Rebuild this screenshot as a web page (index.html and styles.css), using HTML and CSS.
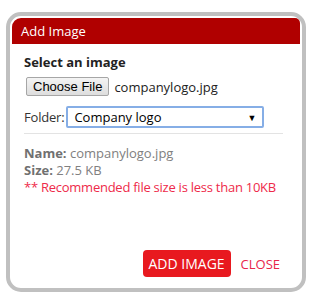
FILE: index.html
```html
<!DOCTYPE html>
<html lang="en">

<head>
    <meta charset="UTF-8">
    <meta name="viewport" content="width=device-width, initial-scale=1.0">
    <title>Add Image</title>
    <link rel="stylesheet" href="styles.css">
</head>

<body>
    <div class="dialog">
        <div class="dialog-header">Add Image</div>
        <div class="dialog-body">
            <div class="field-title">Select an image</div>
            <div class="file-row">
                <button class="choose-button">Choose File</button>
                <span class="file-name">companylogo.jpg</span>
            </div>
            <div class="folder-row">
                <span class="folder-label">Folder:</span>
                <div class="folder-select">
                    <span>Company logo</span>
                    <span class="arrow">&#9660;</span>
                </div>
            </div>
            <div class="divider"></div>
            <div class="file-info">
                <div><strong>Name:</strong> companylogo.jpg</div>
                <div><strong>Size:</strong> 27.5 KB</div>
                <div class="warning">** Recommended file size is less than 10KB</div>
            </div>
        </div>
        <div class="dialog-footer">
            <button class="add-button">ADD IMAGE</button>
            <button class="close-button">CLOSE</button>
        </div>
    </div>
</body>

</html>
```

FILE: styles.css
```css
body {
    margin: 0;
    font-family: 'Open Sans', 'Noto Sans', sans-serif;
    background-color: #ffffff;
}

.dialog {
    box-sizing: border-box;
    width: 300px;
    height: 280px;
    margin: 12px 0 0 6px;
    border: 4px solid #c0c0c0;
    border-radius: 15px;
    padding: 2px;
    background-color: #ffffff;
    display: flex;
    flex-direction: column;
}

.dialog-header {
    height: 26px;
    line-height: 26px;
    padding-left: 9px;
    background-color: #b00000;
    color: #ffffff;
    font-size: 13px;
    border-radius: 9px 5px 0 0;
}

.dialog-body {
    flex: 1;
    padding: 9px 17px 0 12px;
    font-size: 13px;
    color: #222;
}

.field-title {
    font-weight: bold;
    line-height: 18px;
}

.file-row {
    display: flex;
    align-items: center;
    gap: 5px;
    margin-top: 6px;
}

.choose-button {
    height: 19px;
    padding: 0 6px;
    margin-left: 2px;
    font-family: 'Liberation Sans', Arial, sans-serif;
    font-size: 13px;
    color: #000;
    background: linear-gradient(#f4f4f4, #dddddd);
    border: 1px solid #a6a6a6;
    border-radius: 2px;
}

.folder-row {
    display: flex;
    align-items: center;
    gap: 2px;
    margin-top: 10px;
}

.folder-label {
    color: #333;
    letter-spacing: -0.2px;
}

.folder-select {
    box-sizing: border-box;
    width: 198px;
    height: 22px;
    display: flex;
    align-items: center;
    justify-content: space-between;
    padding: 0 6px 0 6px;
    border: 2px solid #86aee6;
    border-radius: 2px;
    color: #000;
}

.folder-select .arrow {
    font-size: 9px;
}

.divider {
    height: 1px;
    background-color: #e3e3e3;
    margin-top: 5px;
}

.file-info {
    margin-top: 11px;
    line-height: 17px;
    color: #808080;
}

.file-info strong {
    color: #707070;
}

.warning {
    color: #ee2a4a;
    white-space: nowrap;
    letter-spacing: -0.25px;
}

.dialog-footer {
    display: flex;
    justify-content: flex-end;
    align-items: center;
    gap: 10px;
    padding: 0 20px 9px 0;
}

.add-button {
    width: 88px;
    height: 27px;
    border: none;
    border-radius: 4px;
    background-color: #e8191f;
    color: #ffffff;
    font-family: 'Open Sans', 'Noto Sans', sans-serif;
    font-size: 14px;
    padding: 0;
}

.close-button {
    border: none;
    background: none;
    padding: 0;
    color: #e8254a;
    font-family: 'Open Sans', 'Noto Sans', sans-serif;
    font-size: 13px;
}
```
